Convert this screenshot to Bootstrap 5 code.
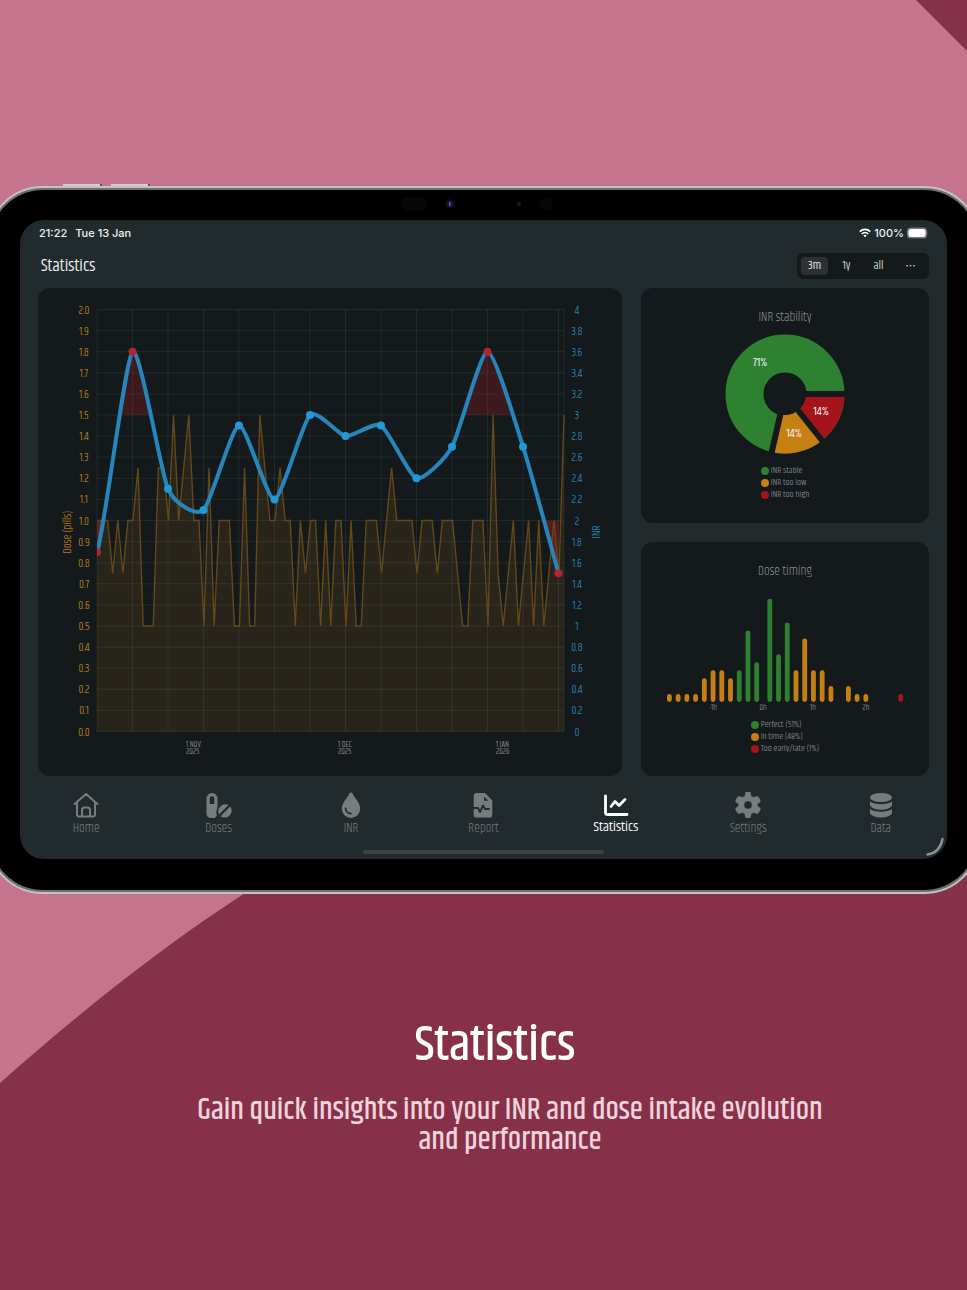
<!DOCTYPE html>
<html lang="en">
<head>
<meta charset="utf-8">
<meta name="viewport" content="width=device-width, initial-scale=1">
<title>Statistics</title>
<link href="https://cdn.jsdelivr.net/npm/bootstrap@5.3.0/dist/css/bootstrap.min.css" rel="stylesheet">
<style>
  :root {
    --pink: #c6738d; --wine: #87304a; --screen: #212b2d; --panel: #14191b;
    --ok: #2e8131; --low: #c67f13; --high: #a5141a; --muted: #777c7e;
    --narrow: Khand, "Roboto Condensed", "Liberation Sans", sans-serif;
  }
  body { font-family: var(--narrow); background: var(--wine); }
  .promo { background: var(--pink); isolation: isolate; padding-top: 186px; }
  .backdrop { z-index: -1; }
  .device { margin: 0 -14px; border-radius: 57px; padding: 2px; background: #6f6f6f; border: 2px solid #c2c2c2; }
  .bezel { background: #000; border-radius: 53px; padding: 0 30px 31px; }
  .bezel-top { height: 30px; }
  .side-buttons { top: -4px; left: 75px; gap: 9px; }
  .side-buttons span { width: 39px; height: 2px; background: #d9ccd0; border-right: 2px solid #6b4d56; }
  .screen { background: var(--screen); border-radius: 24px; color: #f0f2f2; }
  .status { font: 500 11px/16px Inter, sans-serif; padding: 5px 18px 3px 19px; gap: 8px; }
  .status-icons { gap: 3px; }
  .topbar { padding: 9px 18px 9px 21px; }
  .topbar h1 { font-size: 17px; line-height: 26px; }
  .ranges { background: var(--panel); border-radius: 6px; padding: 4px 5px 4px 4px; gap: 5px; }
  .ranges .btn { width: 27px; height: 18px; padding: 0; border: 0; border-radius: 4px; font-size: 12px; line-height: 18px; color: #cfd2d3; }
  .ranges .btn.active { background: #2d3133; color: #e4e6e6; }
  .ranges .more { font-family: Inter, sans-serif; }
  .board { display: grid; grid-template-columns: minmax(0, 584fr) minmax(0, 288fr); gap: 19px; padding: 0 18px; }
  .side-column { gap: 19px; }
  .panel { background: var(--panel); border-radius: 12px; }
  .side-panel { padding-top: 21px; }
  .side-panel h2 { font-size: 13px; line-height: 16px; color: #8d9193; margin-bottom: 9px; }
  .bars { margin-top: 2px; overflow: visible; }
  .legend { font-size: 9px; line-height: 12px; color: #7d8183; margin: 11px 0 0; }
  .bars + .legend { margin-top: 7px; }
  .legend li { gap: 2px; }
  .legend .key { width: 8px; height: 8px; border-radius: 50%; }
  .key-ok { background: var(--ok); } .key-low { background: var(--low); } .key-high { background: var(--high); }
  svg text { font-family: var(--narrow); }
  .tabs { padding-top: 16px; }
  .tabs a { color: var(--muted); font-size: 13px; line-height: 20px; text-decoration: none; }
  .tabs a.active { color: #fff; font-size: 14px; line-height: 18px; }
  .home-bar { width: 26%; height: 4px; border-radius: 2px; background: #404345; margin: 12px auto 5px; }
  .corner { right: 2px; bottom: 2px; }
  .caption { padding-top: 124px; padding-bottom: 130px; }
  .caption h2 { font-size: 49px; line-height: 56px; padding-left: 23px; color: #fff; }
  .caption p { font-size: 30px; line-height: 30px; padding-left: 53px; color: #f1d3dc; margin-top: 21px; }
</style>
</head>
<body>
<main class="promo position-relative overflow-hidden min-vh-100">
  <svg class="backdrop position-absolute top-0 start-0 w-100 h-100" viewBox="0 0 967 1290" preserveAspectRatio="none" aria-hidden="true">
    <path fill="#87304a" d="M916 0H967V51ZM0 1083C80 1012 162 947 242 895C420 776 700 640 967 600V1290H0Z"/>
  </svg>

  <section class="device position-relative">
    <div class="side-buttons position-absolute d-flex"><span></span><span></span></div>
    <div class="bezel">
      <div class="bezel-top d-flex justify-content-center">
        <svg width="180" height="30" viewBox="393 190 180 30" aria-hidden="true">
          <rect x="400" y="197" width="27" height="14" rx="7" fill="#070707"/>
          <circle cx="449" cy="204" r="5" fill="#0b0b1c"/><circle cx="449" cy="204" r="3" fill="#15163c"/><rect x="448" y="202" width="1.500" height="4" fill="#5a5fa8"/>
          <circle cx="518" cy="204" r="2" fill="#1b1b1b"/><circle cx="545" cy="204" r="7" fill="#060606"/>
        </svg>
      </div>
      <div class="screen position-relative">
        <div class="status d-flex align-items-center">
          <span>21:22</span><span>Tue 13 Jan</span>
          <span class="status-icons ms-auto d-flex align-items-center">
            <svg width="12" height="10" viewBox="0 0 12 10" fill="none" stroke="#fff" stroke-width="1.700" aria-hidden="true"><path d="M.8 3.600a7.400 7.400 0 0 1 10.400 0M2.800 5.900a4.600 4.600 0 0 1 6.400 0"/><path d="M6 9.300 4.300 7.600a2.500 2.500 0 0 1 3.400 0Z" fill="#fff" stroke="none"/></svg>
            <span>100%</span>
            <svg width="22" height="12" viewBox="0 0 22 12" aria-hidden="true"><rect y=".5" width="20" height="11" rx="3.500" fill="#707678"/><rect x="1.500" y="2" width="17" height="8" rx="2.500" fill="#fff"/><path d="M20.600 4.300q1.400 1.700 0 3.400z" fill="#707678"/></svg>
          </span>
        </div>
        <header class="topbar d-flex justify-content-between align-items-center">
          <h1 class="m-0 fw-normal">Statistics</h1>
          <div class="ranges d-flex" role="group" aria-label="Range">
            <button type="button" class="btn active">3m</button>
            <button type="button" class="btn">1y</button>
            <button type="button" class="btn">all</button>
            <button type="button" class="btn more" aria-label="More">···</button>
          </div>
        </header>

        <div class="board">
          <div class="panel">
            <svg id="evolution" class="d-block w-100" viewBox="38 288 584 488" role="img" aria-label="INR and dose evolution">
              <defs>
                <clipPath id="plot"><rect x="97" y="305" width="468" height="427"/></clipPath>
                <clipPath id="dots"><rect x="97" y="305" width="475" height="427"/></clipPath>
                <clipPath id="above"><rect x="97" y="305" width="468" height="110"/></clipPath>
                <clipPath id="below"><rect x="97" y="521" width="468" height="211"/></clipPath>
              </defs>
            </svg>
          </div>
          <div class="side-column d-flex flex-column">
            <div class="panel side-panel flex-fill d-flex flex-column align-items-center">
              <h2 class="fw-light">INR stability</h2>
              <svg width="120" height="120" viewBox="-60 -60 120 120" role="img" aria-label="INR stability">
                <circle r="40.500" fill="none" stroke="#2e8131" stroke-width="38"/>
                <path d="M0 0H59.500A59.500 59.500 0 0 1 37.100 46.500Z" fill="#a5141a"/>
                <path d="M0 0 37.100 46.500A59.500 59.500 0 0 1-13.200 58Z" fill="#c67f13"/>
                <path d="M0 0H62M0 0 38.700 48.500M0 0-13.800 60.400" stroke="#14191b" stroke-width="6"/>
                <circle r="21" fill="#14191b"/>
                <g fill="#f0f2f2" font-size="12" text-anchor="middle"><text x="-25" y="-28">71%</text><text x="36" y="21">14%</text><text x="9" y="43">14%</text></g>
              </svg>
              <ul class="legend list-unstyled">
                <li class="d-flex align-items-center"><span class="key key-ok"></span>INR stable</li>
                <li class="d-flex align-items-center"><span class="key key-low"></span>INR too low</li>
                <li class="d-flex align-items-center"><span class="key key-high"></span>INR too high</li>
              </ul>
            </div>
            <div class="panel side-panel flex-fill d-flex flex-column align-items-center">
              <h2 class="fw-light">Dose timing</h2>
              <svg id="timing" class="bars" width="248" height="122" viewBox="661 590 248 122" role="img" aria-label="Dose timing"></svg>
              <ul class="legend list-unstyled">
                <li class="d-flex align-items-center"><span class="key key-ok"></span>Perfect (51%)</li>
                <li class="d-flex align-items-center"><span class="key key-low"></span>In time (48%)</li>
                <li class="d-flex align-items-center"><span class="key key-high"></span>Too early/late (1%)</li>
              </ul>
            </div>
          </div>
        </div>

        <nav class="tabs row g-0 text-center flex-nowrap">
          <a class="col d-flex flex-column align-items-center fw-light" href="#home">
            <svg width="26" height="26" viewBox="0 0 26 26" fill="none" stroke="currentColor" stroke-width="2" stroke-linecap="round" stroke-linejoin="round"><path d="M1.600 12 13 2 24.400 12M4 10.500V22.500Q4 24.500 6 24.500H20Q22 24.500 22 22.500V10.500M9 24.500V18Q9 15.500 11.500 15.500H14.500Q17 15.500 17 18V24.500"/></svg>Home</a>
          <a class="col d-flex flex-column align-items-center fw-light" href="#doses">
            <svg width="26" height="26" viewBox="0 0 26 26" fill="currentColor"><path fill-rule="evenodd" d="M6 1a5.500 5.500 0 0 1 5.500 5.500V16a9 9 0 0 0-.6 7.400A5.500 5.500 0 0 1 .5 20.500V6.500A5.500 5.500 0 0 1 6 1ZM3.700 12H8.300V6.500a2.300 2.300 0 0 0-4.600 0Z"/><path d="M13.100 22.500A7 7 0 0 1 22.500 13.100ZM24.300 14.400A7 7 0 0 1 14.500 24.200Z"/></svg>Doses</a>
          <a class="col d-flex flex-column align-items-center fw-light" href="#inr">
            <svg width="26" height="26" viewBox="0 0 26 26"><path fill="currentColor" d="M13 0.500Q14 .5 14.600 1.600C16.500 6 22.200 11 22.200 16.700A9.200 9.200 0 0 1 3.800 16.700C3.800 11 9.500 6 11.400 1.600Q12 .5 13 .5Z"/><path d="M7.600 16.500Q8.200 21.300 13 21.700" fill="none" stroke="#212b2d" stroke-width="1.800" stroke-linecap="round"/></svg>INR</a>
          <a class="col d-flex flex-column align-items-center fw-light" href="#report">
            <svg width="26" height="26" viewBox="0 0 26 26"><path fill="currentColor" d="M6.500 1H15L22.300 8.500V22.700Q22.300 25.600 19.300 25.600H6.700Q3.700 25.600 3.700 22.700V4Q3.700 1 6.500 1Z"/><path d="M14 4.500V8.800H18.300Z" fill="#212b2d"/><path d="M3 16H8L10 20L13 13.500L15 17H19" fill="none" stroke="#212b2d" stroke-width="1.800" stroke-linecap="round" stroke-linejoin="round"/></svg>Report</a>
          <a class="col d-flex flex-column align-items-center active" href="#statistics" aria-current="page">
            <svg width="26" height="26" viewBox="0 0 26 26" fill="none" stroke="currentColor" stroke-width="2.800" stroke-linecap="round" stroke-linejoin="round"><path d="M2.500 4V20.500Q2.500 22.500 4.500 22.500H24M8 14.500 12 9.500 16 13.500 22 7.500"/></svg>Statistics</a>
          <a class="col d-flex flex-column align-items-center fw-light" href="#settings">
            <svg width="26" height="26" viewBox="0 0 26 26" fill="currentColor"><path fill-rule="evenodd" d="M10.700 0H15.300L16.200 4.200 18.500 5.500 22.600 4.200Q25 6.500 25.500 9.500L22.300 12.300V13.700L25.500 16.500Q25 19.500 22.600 21.800L18.500 20.500 16.200 21.800 15.300 26H10.700L9.800 21.800 7.500 20.500 3.400 21.800Q1 19.500 .5 16.500L3.700 13.700V12.300L.5 9.500Q1 6.500 3.400 4.200L7.500 5.500 9.800 4.200ZM13 9a4 4 0 1 0 0 8 4 4 0 0 0 0-8Z" stroke="currentColor" stroke-width=".4" stroke-linejoin="round"/></svg>Settings</a>
          <a class="col d-flex flex-column align-items-center fw-light" href="#data">
            <svg width="26" height="26" viewBox="0 0 26 26" fill="currentColor"><ellipse cx="13" cy="5.500" rx="11" ry="4.500"/><path d="M2 9.500Q6 12.200 13 12.200T24 9.500V13.500Q21 17.800 13 17.800T2 13.500ZM2 17Q6 19.700 13 19.700T24 17V21.500Q21 25.600 13 25.600T2 21.500Z"/></svg>Data</a>
        </nav>
        <div class="d-flex"><div class="home-bar"></div></div>
        <svg class="corner position-absolute" width="20" height="20" viewBox="0 0 20 20" aria-hidden="true"><path d="M2.500 17.500Q15 15.500 17.500 2" fill="none" stroke="#8b9092" stroke-width="2.500" stroke-linecap="round"/></svg>
      </div>
    </div>
  </section>

  <section class="caption text-center">
    <h2 class="fw-medium mb-0">Statistics</h2>
    <p class="fw-medium mb-0">Gain quick insights into your INR and dose intake evolution<br>and performance</p>
  </section>
</main>

<script src="https://cdn.jsdelivr.net/npm/bootstrap@5.3.0/dist/js/bootstrap.bundle.min.js"></script>
<script>
  const add = (parent, tag, attrs, text) => {
    const node = document.createElementNS('http://www.w3.org/2000/svg', tag);
    for (const key in attrs) node.setAttribute(key, attrs[key]);
    if (text !== undefined) node.textContent = text;
    return parent.appendChild(node);
  };

  // Evolution chart: dose per day and INR per week
  const doses = [1,1,1,.75,1,.75,1,1,1.25,.5,.5,.5,1.25,1.25,1,1.5,1,1.25,1.5,1,1,.5,1.25,.5,1,1,1,.5,.5,1.25,.5,.5,
    1.5,1.25,1,1,1.25,1,1,.5,1,.75,1,1,.5,1,.5,1,1,.5,1,.5,.5,1,1,1,.75,1,1.25,1,1,1,1,.75,1,1,1,.75,1,1,1,.75,.5,.5,
    1,1,1,.5,1.5,.75,.5,.75,1,.5,.75,1,.5,1,.5,.75,1,.75,1.5];
  const inr = [1.7,3.6,2.3,2.1,2.9,2.2,3,2.8,2.9,2.4,2.7,3.6,2.7,1.5];
  const left = 97, right = 564, base = 731.5, tenth = 21.1, week = 35.5, day = week / 7;
  const chart = document.getElementById('evolution');
  const doseLine = doses.map((d, i) => `${left + .5 + i * day},${base - d * 10 * tenth}`).join(' ');
  add(chart, 'polygon', {points: `${left},${base} ${left},${base - 10 * tenth} ${doseLine} ${right},${base}`, fill: '#29251b', 'clip-path': 'url(#plot)'});

  const grid = {stroke: '#8fb8b0', 'stroke-opacity': .11};
  for (let i = 0; i <= 20; i++) {
    const y = base - i * tenth;
    add(chart, 'line', {x1: left, x2: right, y1: y, y2: y, ...grid});
    add(chart, 'text', {x: 84, y: y + 4, fill: '#b07a1c', 'font-size': 11, 'text-anchor': 'middle'}, (i / 10).toFixed(1));
    add(chart, 'text', {x: 577, y: y + 4, fill: '#2580b0', 'font-size': 11, 'text-anchor': 'middle'}, i % 5 ? (i / 5).toFixed(1) : i / 5);
  }
  for (let x = left; x < right; x += week)
    add(chart, 'line', {x1: x, x2: x, y1: base - 20 * tenth, y2: base, ...grid});
  add(chart, 'line', {x1: right, x2: right, y1: base - 20 * tenth, y2: base, ...grid});

  // Smooth curve: each handle follows the chord between the neighbouring points
  const pts = inr.map((v, i) => [left + i * week, base - v * 5 * tenth]);
  const before = [left - week, base - 1.8 * 5 * tenth];
  const handle = (i, side) => {
    const a = pts[i - 1] || before, p = pts[i], b = pts[i + 1] || p;
    return [0, 1].map(k => p[k] + side * .1 * (b[k] - a[k]));
  };
  let curve = `M${pts[0]}`;
  for (let i = 1; i < pts.length; i++) curve += `C${handle(i - 1, 1)} ${handle(i, -1)} ${pts[i]}`;
  add(chart, 'path', {d: `${curve}V${base}H${left}Z`, fill: '#b81e22', 'fill-opacity': .25, 'clip-path': 'url(#above)'});
  add(chart, 'path', {d: `${curve}V305H${left}Z`, fill: '#b81e22', 'fill-opacity': .4, 'clip-path': 'url(#below)'});
  add(chart, 'polyline', {points: doseLine, fill: 'none', stroke: '#63481a', 'stroke-width': 1.4, 'clip-path': 'url(#plot)'});
  add(chart, 'path', {d: curve, fill: 'none', stroke: '#2686bc', 'stroke-width': 4, 'stroke-linejoin': 'round', 'clip-path': 'url(#plot)'});
  pts.forEach((p, i) => add(chart, 'circle', {cx: p[0], cy: p[1], r: 4, fill: inr[i] > 3 || inr[i] < 2 ? '#b02531' : '#2099d8', 'clip-path': 'url(#dots)'}));

  [['1 NOV', '2025', 186], ['1 DEC', '2025', 338], ['1 JAN', '2026', 496]].forEach(([d, y, x]) => {
    add(chart, 'text', {x, y: 747, fill: '#85898b', 'font-size': 8}, d);
    add(chart, 'text', {x, y: 754, fill: '#85898b', 'font-size': 8}, y);
  });
  add(chart, 'text', {transform: 'translate(71 532) rotate(-90)', fill: '#b07a1c', 'font-size': 11, 'text-anchor': 'middle'}, 'Dose (pills)');
  add(chart, 'text', {transform: 'translate(600 532) rotate(-90)', fill: '#2580b0', 'font-size': 11, 'text-anchor': 'middle'}, 'INR');

  // Dose timing: [slot, count, tone]
  const timing = document.getElementById('timing');
  const bars = [[0,1],[1,1],[2,1],[3,1],[4,3],[5,4],[6,4],[7,3],[8,4,1],[9,9,1],[10,5,1],[11.5,13,1],[12.5,6,1],[13.5,10,1],
    [14.5,4],[15.5,8],[16.5,4],[17.5,4],[18.5,2],[20.5,2],[21.5,1],[22.5,1],[26.5,1,2]];
  const tones = ['#c67f13', '#2e8131', '#a5141a'];
  bars.forEach(([slot, n, tone = 0]) => add(timing, 'rect',
    {x: 667 + slot * 8.73, y: 702 - n * 7.95, width: 4.8, height: n * 7.95, rx: 2.4, fill: tones[tone]}));
  [['-1h', 713], ['0h', 763], ['1h', 813], ['2h', 866]].forEach(([t, x]) =>
    add(timing, 'text', {x, y: 710, fill: '#7d8183', 'font-size': 8, 'text-anchor': 'middle'}, t));
</script>
</body>
</html>
